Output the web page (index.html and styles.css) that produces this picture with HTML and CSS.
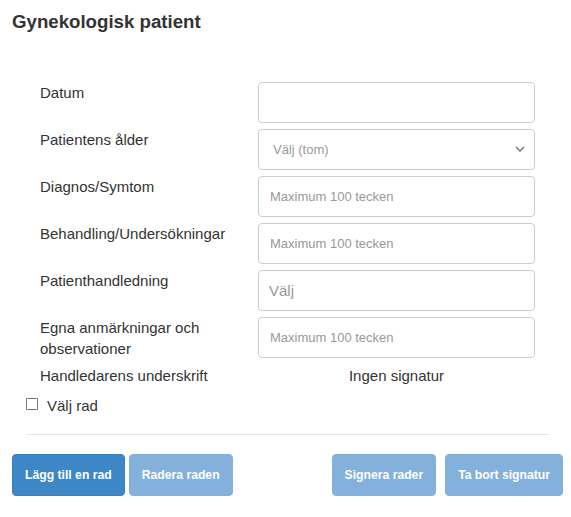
FILE: index.html
```html
<!DOCTYPE html>
<html lang="sv">
<head>
<meta charset="utf-8">
<title>Gynekologisk patient</title>
<link rel="stylesheet" href="styles.css">
</head>
<body>
<div class="page">
  <h1 class="title">Gynekologisk patient</h1>
  <div class="form">
    <label class="lbl">Datum</label>
    <div class="ctrl"></div>

    <label class="lbl">Patientens ålder</label>
    <div class="ctrl select">
      <span class="sel-text">Välj (tom)</span>
      <svg class="chev" width="10" height="6" viewBox="0 0 10 6"><path d="M1 1 L5 5 L9 1" fill="none" stroke="#777" stroke-width="1.5"/></svg>
    </div>

    <label class="lbl">Diagnos/Symtom</label>
    <input class="ctrl field" type="text" placeholder="Maximum 100 tecken">

    <label class="lbl">Behandling/Undersökningar</label>
    <input class="ctrl field" type="text" placeholder="Maximum 100 tecken">

    <label class="lbl">Patienthandledning</label>
    <input class="ctrl field big" type="text" placeholder="Välj">

    <label class="lbl">Egna anmärkningar och observationer</label>
    <input class="ctrl field" type="text" placeholder="Maximum 100 tecken">

    <div class="lbl">Handledarens underskrift</div>
    <div class="sig">Ingen signatur</div>
  </div>

  <label class="check-row"><span class="cb"></span><span>Välj rad</span></label>

  <div class="rule"></div>

  <div class="actions">
    <div class="group left">
      <button class="btn primary">Lägg till en rad</button>
      <button class="btn muted">Radera raden</button>
    </div>
    <div class="group right">
      <button class="btn muted">Signera rader</button>
      <button class="btn muted">Ta bort signatur</button>
    </div>
  </div>
</div>
</body>
</html>
```
FILE: styles.css
```css
* { box-sizing: border-box; }
body {
  margin: 0;
  background: #fff;
  font-family: "Liberation Sans", Arial, sans-serif;
  color: #333;
}
.page {
  padding: 0 8px 0 12px;
}
.title {
  margin: 11px 0 0 0;
  font-size: 18.67px;
  font-weight: bold;
  line-height: 21.5px;
  color: #333;
}
.form {
  margin: 49px 0 0 28px;
  display: grid;
  grid-template-columns: 218px 277px;
  row-gap: 6px;
}
.lbl {
  font-size: 15px;
  line-height: 21px;
  padding-right: 14px;
}
.ctrl {
  height: 41px;
  border: 1px solid #ccc;
  border-radius: 4px;
  background: #fff;
}
.field {
  width: 100%;
  padding: 0 11px;
  font-family: "Liberation Sans", Arial, sans-serif;
  font-size: 13px;
  color: #555;
  outline: none;
}
.field::placeholder { color: #999; }
.field.big { font-size: 15px; padding-left: 10px; }
.select {
  display: flex;
  align-items: center;
  justify-content: space-between;
  padding: 0 9px 0 14px;
}
.sel-text {
  font-size: 13px;
  color: #999;
}
.chev { display: block; }
.sig {
  font-size: 15px;
  line-height: 21px;
  text-align: center;
}
.check-row {
  margin: 9px 0 0 14px;
  display: flex;
  align-items: center;
  gap: 9px;
  font-size: 15px;
  line-height: 21px;
}
.cb {
  display: block;
  width: 12px;
  height: 12px;
  border: 1px solid #777;
  border-radius: 1px;
  background: #fff;
  position: relative;
  top: -1px;
}
.rule {
  margin: 18px 0 0 14px;
  width: 523px;
  border-top: 1px solid #e6e6e6;
}
.actions {
  margin-top: 19px;
  display: flex;
  justify-content: space-between;
}
.group { display: flex; }
.group.left { gap: 4px; }
.group.right { gap: 9px; }
.btn {
  height: 42px;
  padding: 0 12px;
  border: 1px solid transparent;
  border-radius: 4px;
  font-family: "Liberation Sans", Arial, sans-serif;
  font-size: 12.2px;
  font-weight: bold;
  color: #fff;
}
.btn.primary {
  background: #3e87c7;
  border-color: #3a7fbc;
}
.btn.muted {
  background: #84b1dc;
  border-color: #84b1dc;
}
```
